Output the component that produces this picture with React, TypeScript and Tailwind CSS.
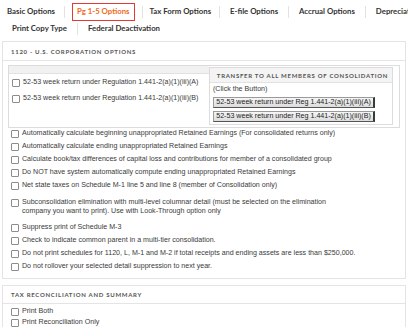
import React from "react";

const lato = "font-['Lato',sans-serif]";

function Box() {
  return (
    <span className="inline-block w-[8px] h-[8px] shrink-0 border border-[#8c8c8c] rounded-[1px] bg-white" />
  );
}

function Check({ label }: { label: React.ReactNode }) {
  return (
    <div className="flex items-start gap-[3px] leading-[9px]">
      <span className="h-[9px] flex items-center shrink-0">
        <Box />
      </span>
      <span>{label}</span>
    </div>
  );
}

function Sep() {
  return <span className="w-px h-[12px] bg-[#e2e2e2] shrink-0" />;
}

function RegButton({ label }: { label: string }) {
  return (
    <button className="w-[162px] h-[11px] flex items-center justify-center text-[7.1px] leading-none text-[#222] bg-[linear-gradient(#f6f6f6,#dcdcdc)] border border-[#9a9a9a] border-r-[2px] border-r-[#3a3a3a] border-b-[#555]">
      {label}
    </button>
  );
}

export default function App() {
  const options = [
    "Automatically calculate beginning unappropriated Retained Earnings (For consolidated returns only)",
    "Automatically calculate ending unappropriated Retained Earnings",
    "Calculate book/tax differences of capital loss and contributions for member of a consolidated group",
    "Do NOT have system automatically compute ending unappropriated Retained Earnings",
    "Net state taxes on Schedule M-1 line 5 and line 8 (member of Consolidation only)",
  ];

  const more = [
    "Suppress print of Schedule M-3",
    "Check to indicate common parent in a multi-tier consolidation.",
    "Do not print schedules for 1120, L, M-1 and M-2 if total receipts and ending assets are less than $250,000.",
    "Do not rollover your selected detail suppression to next year.",
  ];

  return (
    <div className="w-[408px] h-[327px] overflow-hidden bg-white font-['Liberation_Sans',Arial,sans-serif] text-[7.1px] leading-[9px] text-[#3a3a3a]">
      <nav className={`${lato} font-bold text-[7.8px] leading-none text-[#333] whitespace-nowrap`}>
        <div className="flex items-center h-[18px] mt-[3px] pl-[7px]">
          <span className="pr-[9px]">Basic Options</span>
          <Sep />
          <span className="ml-[7px] mr-[7px] h-[18px] px-[4px] flex items-center border border-[#e53935] text-[#f26a1b]">
            Pg 1-5 Options
          </span>
          <Sep />
          <span className="pl-[7px] pr-[8px]">Tax Form Options</span>
          <Sep />
          <span className="px-[10px]">E-file Options</span>
          <Sep />
          <span className="px-[10px]">Accrual Options</span>
          <Sep />
          <span className="pl-[10px]">Depreciation</span>
        </div>
        <div className="flex items-center h-[15px] pl-[12px]">
          <span className="pr-[10px]">Print Copy Type</span>
          <Sep />
          <span className="pl-[10px]">Federal Deactivation</span>
        </div>
      </nav>

      <section className="mx-[2px] mt-[5px] border border-[#e4e4e4]">
        <header
          className={`h-[19px] flex items-center px-[8px] border-b border-[#e4e4e4] ${lato} font-bold text-[6px] tracking-[0.12em] text-[#555]`}
        >
          1120 - U.S. CORPORATION OPTIONS
        </header>

        <div className="px-[5px] pt-[4px] pb-[7px]">
          <div className="flex h-[63px] border border-[#dcdcdc]">
            <div className="flex-1 flex flex-col">
              <div className="h-[8px] bg-[#f1f1f1] border-b border-[#e2e2e2]" />
              <div className="flex flex-col gap-[7px] pl-[3px] pt-[4px]">
                <Check label="52-53 week return under Regulation 1.441-2(a)(1)(iii)(A)" />
                <Check label="52-53 week return under Regulation 1.441-2(a)(1)(iii)(B)" />
              </div>
            </div>
            <div className="w-[190px] pt-[1px] pr-[6px] pb-[2px]">
              <div className="h-full border border-[#dcdcdc]">
                <div
                  className={`h-[15px] flex items-center justify-center pl-[3px] bg-[#f4f4f4] border-b border-[#e2e2e2] ${lato} font-bold text-[6px] tracking-[0.12em] text-[#555]`}
                >
                  TRANSFER TO ALL MEMBERS OF CONSOLIDATION
                </div>
                <div className="flex flex-col gap-[3px] pl-[3px] pt-[2px]">
                  <span>(Click the Button)</span>
                  <RegButton label="52-53 week return under Reg 1.441-2(a)(1)(iii)(A)" />
                  <RegButton label="52-53 week return under Reg 1.441-2(a)(1)(iii)(B)" />
                </div>
              </div>
            </div>
          </div>

          <div className="flex flex-col gap-[4px] pl-[3px] pt-[1px]">
            {options.map((o) => (
              <Check key={o} label={o} />
            ))}
            <div className="mt-[4px] mb-[3px]">
              <Check
                label={
                  <>
                    Subconsolidation elimination with multi-level columnar detail (must be selected on the elimination
                    <br />
                    company you want to print). Use with Look-Through option only
                  </>
                }
              />
            </div>
            {more.map((o) => (
              <Check key={o} label={o} />
            ))}
          </div>
        </div>
      </section>

      <section className="mx-[2px] mt-[6px] border border-[#e4e4e4]">
        <header
          className={`h-[18px] flex items-center px-[8px] border-b border-[#e4e4e4] ${lato} font-bold text-[6px] tracking-[0.12em] text-[#555]`}
        >
          TAX RECONCILIATION AND SUMMARY
        </header>
        <div className="flex flex-col gap-[2px] pl-[8px] pt-[3px] pb-[2px]">
          <Check label="Print Both" />
          <Check label="Print Reconciliation Only" />
        </div>
      </section>
    </div>
  );
}
